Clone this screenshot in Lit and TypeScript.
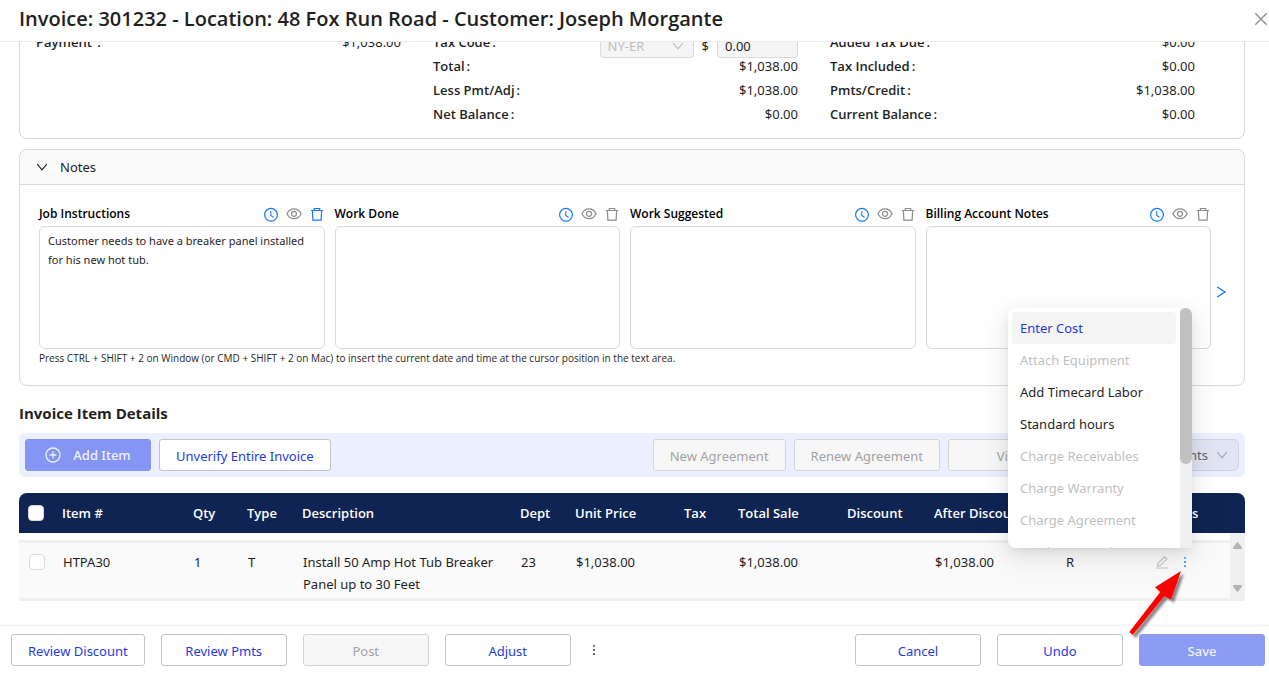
import { LitElement, html, css, svg } from "lit";
import { customElement } from "lit/decorators.js";
import { classMap } from "lit/directives/class-map.js";

const stroke = (cls: string, size: number, body: unknown) => html`<svg
  class=${cls} width=${size} height=${size} viewBox="0 0 ${size} ${size}"
  fill="none" stroke="currentColor" aria-hidden="true">${body}</svg>`;

const iconClose = () => stroke("icon", 16, svg`<path d="M2.3 2.3 13.7 13.7M13.7 2.3 2.3 13.7" stroke-width="1.4"/>`);
const iconDown = () => stroke("icon", 12, svg`<path d="M1.2 3.2 6 8.8 10.8 3.2" stroke-width="1.1"/>`);
const iconNext = () => stroke("icon", 12, svg`<path d="M2.2 1 10 6 2.2 11" stroke-width="1.4"/>`);
const iconClock = () => stroke("icon", 16, svg`<circle cx="8" cy="8.8" r="6.4" stroke-width="1.2"/><path d="M7.8 5v4.4l2.7 1.9" stroke-width="1.1"/>`);
const iconEye = () => stroke("icon", 16, svg`<path d="M.9 7.8C2.6 4.4 5 2.9 8 2.9s5.4 1.5 7.1 4.9c-1.7 3.4-4.1 4.9-7.1 4.9S2.6 11.2.9 7.8Z" stroke-width="1.2"/><circle cx="8" cy="7.8" r="2.5" stroke-width="1.2"/>`);
const iconTrash = () => stroke("icon", 16, svg`<path d="M2 4.5h12M5.3 4.4V2.5h5.4v1.9M3.4 4.6l.5 9.5h8.2l.5-9.5" stroke-width="1.2"/>`);
const iconPlus = () => stroke("icon", 16, svg`<circle cx="8" cy="8" r="7" stroke-width="1.3"/><path d="M8 4.6v6.8M4.6 8h6.8" stroke-width="1.3"/>`);
const iconEdit = () => stroke("icon", 14, svg`<path d="M3 8.3 9.5 1.8l2.3 2.3L5.3 10.6l-2.8.5ZM1.2 13h11.8" stroke-width="1.1"/>`);
const iconMore = () => html`<svg class="icon" width="14" height="14" viewBox="0 0 14 14" fill="currentColor" aria-hidden="true">
  <circle cx="7" cy="2.8" r="0.9"/><circle cx="7" cy="7" r="0.9"/><circle cx="7" cy="11.2" r="0.9"/></svg>`;

interface Total { label: string; value: string; }

const paid: Total[] = [
  { label: "Total", value: "$1,038.00" },
  { label: "Less Pmt/Adj", value: "$1,038.00" },
  { label: "Net Balance", value: "$0.00" },
];
const balance: Total[] = [
  { label: "Added Tax Due", value: "$0.00" },
  { label: "Tax Included", value: "$0.00" },
  { label: "Pmts/Credit", value: "$1,038.00" },
  { label: "Current Balance", value: "$0.00" },
];
const notes = [
  { id: "job", label: "Job Instructions", text: "Customer needs to have a breaker panel installed for his new hot tub." },
  { id: "done", label: "Work Done", text: "" },
  { id: "suggested", label: "Work Suggested", text: "" },
  { id: "billing", label: "Billing Account Notes", text: "" },
];
const columns = [
  ["item", "Item #"], ["narrow", "Qty"], ["type", "Type"], ["description", "Description"],
  ["type", "Dept"], ["money", "Unit Price"], ["narrow", "Tax"], ["money", "Total Sale"],
  ["discount", "Discount"], ["after", "After Discount"], ["discount", "Status"], ["actions", "Actions"],
];
const menu = [
  { label: "Enter Cost", enabled: true, active: true },
  { label: "Attach Equipment", enabled: false, active: false },
  { label: "Add Timecard Labor", enabled: true, active: false },
  { label: "Standard hours", enabled: true, active: false },
  { label: "Charge Receivables", enabled: false, active: false },
  { label: "Charge Warranty", enabled: false, active: false },
  { label: "Charge Agreement", enabled: false, active: false },
  { label: "Hardware Product", enabled: false, active: false },
];

@customElement("app-root")
export class AppRoot extends LitElement {
  static styles = css`
    :host {
      display: flex;
      flex-direction: column;
      position: relative;
      height: 100vh;
      overflow: hidden;
      background: #fff;
      color: #1f1f1f;
      font: 13px/22px "Noto Sans", "Open Sans", sans-serif;
    }
    *, *::before { box-sizing: border-box; }
    button, input, select, textarea { font: inherit; color: inherit; margin: 0; }
    button { cursor: pointer; }
    .icon { display: block; flex: none; }

    .header {
      display: flex;
      align-items: center;
      justify-content: space-between;
      flex: none;
      height: 42px;
      padding: 0 0 4px 19px;
      border-bottom: 1px solid #ececec;
    }
    .title { margin: 0; font: 600 20px/28px "Open Sans", sans-serif; }
    .plain { display: flex; padding: 0; border: 0; background: none; }
    .close { color: #8c8c8c; }

    .content {
      display: flex;
      flex-direction: column;
      justify-content: flex-end;
      flex: 1;
      min-height: 0;
      overflow: hidden;
      padding: 0 24px 24px 19px;
    }
    .content > * { flex: none; }

    .card { border: 1px solid #d9d9d9; border-radius: 8px; }
    .summary {
      display: grid;
      grid-template-columns: repeat(3, 1fr);
      gap: 32px;
      padding: 12px 49px 12px 16px;
      margin-bottom: 10px;
    }
    .line { display: flex; justify-content: space-between; align-items: center; height: 24px; }
    .label { font-family: "Open Sans", sans-serif; font-weight: 600; }
    .colon { margin-left: 2px; }
    .tax { display: flex; align-items: center; gap: 8px; height: 32px; padding-top: 8px; }
    .code {
      display: flex;
      align-items: center;
      position: relative;
      color: #bfbfbf;
    }
    .code .icon { position: absolute; right: 10px; }
    .code-select, .amount {
      height: 24px;
      border: 1px solid #d9d9d9;
      border-radius: 4px;
      background: #f5f5f5;
      opacity: 1;
      padding: 0 7px;
    }
    .code-select { width: 94px; appearance: none; color: #bfbfbf; }
    .amount { width: 81px; }

    .notes-head {
      display: flex;
      align-items: center;
      gap: 12px;
      width: 100%;
      height: 35px;
      padding: 0 16px;
      border: 0;
      border-bottom: 1px solid #d9d9d9;
      border-radius: 8px 8px 0 0;
      background: #fafafa;
      text-align: left;
    }
    .notes { display: flex; align-items: center; gap: 4px; padding: 18px 17px 0 19px; }
    .next { padding-top: 32px; }
    .notes-grid { display: grid; grid-template-columns: repeat(4, 1fr); gap: 10px; flex: 1; }
    .note-bar { display: flex; justify-content: space-between; align-items: center; height: 22px; }
    .note-label { font: 600 12px/22px "Open Sans", sans-serif; color: #000; }
    .note-icons { display: flex; gap: 7px; color: #8c8c8c; }
    .blue { color: #1677ff; }
    .note-text {
      display: block;
      width: 100%;
      height: 123px;
      margin-top: 1px;
      padding: 4px 8px;
      border: 1px solid #d9d9d9;
      border-radius: 6px;
      background: #fff;
      resize: none;
      outline: 0;
      font-size: 11px;
      line-height: 19px;
    }
    .hint { margin: 0; padding: 0 19px 18px; font: 10px/18px "Open Sans", sans-serif; }

    .section-title { margin: 15px 0 8px; font: 700 15px/24px "Open Sans", sans-serif; }
    .toolbar {
      display: flex;
      align-items: center;
      gap: 8px;
      padding: 6px;
      margin-bottom: 16px;
      border-radius: 6px;
      background: #ebefff;
    }
    .spacer { flex: 1; }
    .btn {
      display: flex;
      align-items: center;
      justify-content: center;
      gap: 12px;
      min-width: 126px;
      height: 32px;
      padding: 2px 16px 0;
      border: 1px solid #c4c4c4;
      border-radius: 3px;
      background: #fff;
      color: #1f3ae0;
      white-space: nowrap;
    }
    .btn:disabled { border-color: #d4d4d4; background: #f7f7f7; color: #a3a3a3; cursor: default; }
    .btn.primary { padding-top: 0; border-color: #8595f3; background: #8595f3; color: #f0f2ff; font-weight: 500; }
    .btn.save { padding-top: 2px; border-color: #8c9cf3; background: #8c9cf3; }
    .picker { display: flex; align-items: center; position: relative; width: 157px; color: #5f626e; }
    .picker .icon { position: absolute; right: 11px; color: #a0a3b0; }
    .picker-select {
      width: 100%;
      height: 32px;
      padding: 0 30px 0 12px;
      border: 1px solid #d0d3de;
      border-radius: 6px;
      background: #e0e4f3;
      appearance: none;
      text-align-last: right;
      opacity: 1;
    }

    .grid { position: relative; }
    .items { width: 100%; table-layout: fixed; border-collapse: separate; border-spacing: 0; }
    .items th {
      height: 40px;
      padding: 0 8px;
      background: #0f2453;
      color: #fff;
      font-family: "Open Sans", sans-serif;
      font-weight: 600;
      text-align: left;
      white-space: nowrap;
    }
    .items th:first-child { border-top-left-radius: 8px; padding-left: 9px; }
    .items th:last-child { border-top-right-radius: 8px; }
    .items tbody::before { content: ""; display: block; height: 7px; }
    .items td {
      padding: 8px 8px 3px 9px;
      border: solid #f0f0f0;
      border-width: 3px 0;
      background: #fafafa;
      vertical-align: top;
    }
    .items td:first-child { padding-left: 10px; }
    .col-check { width: 35px; }
    .col-item { width: 131px; }
    .col-narrow { width: 54px; }
    .col-type { width: 55px; }
    .col-money { width: 109px; }
    .col-discount { width: 87px; }
    .col-after { width: 131px; }
    .col-actions { width: 101px; }
    .tick {
      appearance: none;
      display: block;
      width: 16px;
      height: 16px;
      border: 1px solid #d9d9d9;
      border-radius: 4px;
      background: #fff;
    }
    .items td .tick { margin-top: 3px; }
    .row-actions { display: flex; align-items: center; gap: 9px; height: 22px; padding-left: 2px; color: #bfbfbf; }

    .scroll {
      position: absolute;
      right: 0;
      top: 40px;
      bottom: 0;
      width: 15px;
      display: flex;
      flex-direction: column;
      align-items: center;
      justify-content: space-between;
      padding: 8px 0;
      background: #f0f0f0;
    }
    .popup {
      position: absolute;
      right: 53px;
      bottom: 53px;
      z-index: 2;
      display: flex;
      width: 184px;
      height: 240px;
      overflow: hidden;
      border-radius: 8px 6px 0 8px;
      background: #fff;
    }
    .popup-shadow {
      position: absolute;
      right: 53px;
      bottom: 53px;
      z-index: 1;
      width: 184px;
      height: 240px;
      border-radius: 8px;
      box-shadow: 0 6px 16px rgba(0, 0, 0, 0.08), 0 3px 6px -4px rgba(0, 0, 0, 0.12), 0 9px 28px 8px rgba(0, 0, 0, 0.05);
    }
    .menu { flex: 1; margin: 0; padding: 4px; list-style: none; }
    .entry {
      display: block;
      width: 100%;
      height: 32px;
      padding: 0 8px;
      border: 0;
      border-radius: 4px;
      background: none;
      text-align: left;
    }
    .entry:disabled { color: #bfbfbf; cursor: default; }
    .entry.active { background: #f5f5f5; color: #1f3ae0; }
    .track { width: 12px; background: #f0f0f0; }
    .thumb { height: 156px; border-radius: 6px; background: #c1c1c1; }

    .footer {
      display: flex;
      align-items: center;
      gap: 16px;
      flex: none;
      height: 58px;
      padding: 0 4px 9px 11px;
      border-top: 1px solid #f0f0f0;
    }
    .pointer { position: absolute; right: 73px; bottom: 41px; z-index: 3; pointer-events: none; }
  `;

  private totals(rows: Total[]) {
    return rows.map((r) => html`<div class="line"><span class="label">${r.label}<span class="colon">:</span></span><span>${r.value}</span></div>`);
  }

  private note(n: (typeof notes)[number]) {
    return html`<div>
      <div class="note-bar">
        <label class="note-label" for=${n.id}>${n.label}</label>
        <span class="note-icons">
          <button class="plain blue" aria-label="Insert time">${iconClock()}</button>
          <button class="plain" aria-label="Preview">${iconEye()}</button>
          <button class=${classMap({ plain: true, blue: n.text !== "" })} aria-label="Clear">${iconTrash()}</button>
        </span>
      </div>
      <textarea class="note-text" id=${n.id} spellcheck="false" .value=${n.text}></textarea>
    </div>`;
  }

  render() {
    return html`
      <header class="header">
        <h1 class="title">Invoice: 301232 - Location: 48 Fox Run Road - Customer: Joseph Morgante</h1>
        <button class="plain close" aria-label="Close">${iconClose()}</button>
      </header>

      <main class="content">
        <section class="card summary">
          <div>${this.totals([{ label: "Payment ", value: "$1,038.00" }])}</div>
          <div>
            <div class="line">
              <label class="label" for="tax-code">Tax Code<span class="colon">:</span></label>
              <span class="tax">
                <span class="code">
                  <select class="code-select" id="tax-code" disabled><option>NY-ER</option></select>
                  ${iconDown()}
                </span>
                <label for="tax-amount">$</label>
                <input class="amount" id="tax-amount" value="0.00" readonly />
              </span>
            </div>
            ${this.totals(paid)}
          </div>
          <div>${this.totals(balance)}</div>
        </section>

        <section class="card">
          <button class="notes-head" aria-expanded="true">${iconDown()}Notes</button>
          <div class="notes">
            <div class="notes-grid">${notes.map((n) => this.note(n))}</div>
            <button class="plain blue next" aria-label="Next notes">${iconNext()}</button>
          </div>
          <p class="hint">Press CTRL + SHIFT + 2 on Window (or CMD + SHIFT + 2 on Mac) to insert the current date and time at the cursor position in the text area.</p>
        </section>

        <h2 class="section-title">Invoice Item Details</h2>
        <div class="toolbar">
          <button class="btn primary">${iconPlus()}Add Item</button>
          <button class="btn">Unverify Entire Invoice</button>
          <span class="spacer"></span>
          <button class="btn" disabled>New Agreement</button>
          <button class="btn" disabled>Renew Agreement</button>
          <button class="btn" disabled>View</button>
          <span class="picker">
            <select class="picker-select" aria-label="Attachments"><option>Attachments</option></select>
            ${iconDown()}
          </span>
        </div>

        <div class="grid">
          <table class="items">
            <colgroup>
              <col class="col-check" />
              ${columns.map(([c]) => html`<col class="col-${c}" />`)}
            </colgroup>
            <thead>
              <tr>
                <th><input class="tick" type="checkbox" aria-label="Select all items" /></th>
                ${columns.map(([, label]) => html`<th>${label}</th>`)}
              </tr>
            </thead>
            <tbody>
              <tr>
                <td><input class="tick" type="checkbox" aria-label="Select HTPA30" /></td>
                <td>HTPA30</td><td>1</td><td>T</td>
                <td>Install 50 Amp Hot Tub Breaker Panel up to 30 Feet</td>
                <td>23</td><td>$1,038.00</td><td></td><td>$1,038.00</td><td></td>
                <td>$1,038.00</td><td>R</td>
                <td>
                  <span class="row-actions">
                    <button class="plain" aria-label="Edit">${iconEdit()}</button>
                    <button class="plain blue" aria-label="More actions">${iconMore()}</button>
                  </span>
                </td>
              </tr>
            </tbody>
          </table>
          <div class="scroll" aria-hidden="true">
            <svg width="9" height="8" viewBox="0 0 9 8" fill="#b3b3b3"><path d="M4.5.8 9 6.5 8.5 8h-8L0 6.5Z"/></svg>
            <svg width="9" height="8" viewBox="0 0 9 8" fill="#b3b3b3"><path d="M4.5 7.2 9 1.5 8.5 0h-8L0 1.5Z"/></svg>
          </div>
          <div class="popup-shadow"></div>
          <div class="popup">
            <ul class="menu">
              ${menu.map((m) => html`<li>
                <button class=${classMap({ entry: true, active: m.active })} ?disabled=${!m.enabled}>${m.label}</button>
              </li>`)}
            </ul>
            <div class="track" aria-hidden="true"><div class="thumb"></div></div>
          </div>
        </div>
      </main>

      <footer class="footer">
        <button class="btn">Review Discount</button>
        <button class="btn">Review Pmts</button>
        <button class="btn" disabled>Post</button>
        <button class="btn">Adjust</button>
        <button class="plain" aria-label="More">${iconMore()}</button>
        <span class="spacer"></span>
        <button class="btn">Cancel</button>
        <button class="btn">Undo</button>
        <button class="btn primary save">Save</button>
      </footer>

      <svg class="pointer" width="70" height="74" viewBox="0 0 70 74" aria-hidden="true">
        <defs><filter id="soft" x="-20%" y="-20%" width="150%" height="150%">
          <feDropShadow dx="3" dy="3" stdDeviation="1.2" flood-color="#000" flood-opacity=".45"/>
        </filter></defs>
        <path filter="url(#soft)" fill="#f00" d="M55 3 29 19.3 34.3 24 3.3 64 6.7 67 38.5 28 45 31.7Z"/>
      </svg>
    `;
  }
}
